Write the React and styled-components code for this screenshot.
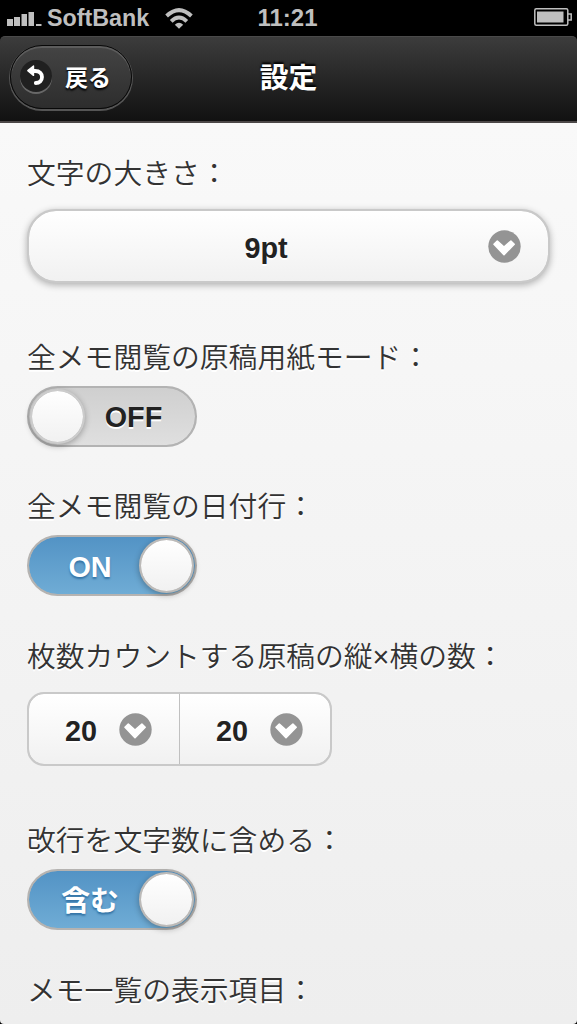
import React, { Component } from 'react';
import styled, { createGlobalStyle } from 'styled-components';

const GlobalStyle = createGlobalStyle`
    * {
        box-sizing: border-box;
    }

    body {
        margin: 0;
        background: #000;
        font-family: "Liberation Sans", "Noto Sans CJK JP", sans-serif;
    }
`;

const Screen = styled.div`
    display: flex;
    flex-direction: column;
    width: 577px;
    height: 1024px;
    overflow: hidden;
    background: #000;
`;

const StatusBar = styled.div`
    display: grid;
    grid-template-columns: 1fr auto 1fr;
    align-items: center;
    flex: none;
    height: 36px;
    padding: 0 5px 0 7px;
    color: #bfbfbf;
    font-size: 23.3px;
    font-weight: 700;
    line-height: 36px;
`;

const Carrier = styled.div`
    display: flex;
    align-items: center;

    span {
        margin: 0 16px 0 5px;
    }
`;

const Clock = styled.div`
    margin-left: -4px;
    font-size: 24px;
`;

const Power = styled.div`
    display: flex;
    justify-content: flex-end;
    padding-bottom: 2px;
`;

const Header = styled.header`
    display: grid;
    grid-template-columns: 1fr auto 1fr;
    align-items: center;
    flex: none;
    height: 87px;
    padding: 0 10px 5px;
    border-top: 1px solid #4a4a4a;
    border-bottom: 2px solid #4c4848;
    border-radius: 5px 5px 0 0;
    background: linear-gradient(#3c3c3c, #111);
    color: #fff;
    text-shadow: 0 -2px 2px #000;

    h1 {
        margin: 0;
        padding-top: 3px;
        font-size: 28.8px;
        font-weight: 700;
        line-height: 40px;
    }
`;

const BackButton = styled.button`
    display: flex;
    align-items: center;
    justify-self: start;
    width: 122px;
    height: 64px;
    padding: 0 0 2px 9px;
    border: 1px solid #080808;
    border-radius: 32px;
    background: linear-gradient(#444, #2d2d2d);
    box-shadow: inset 0 2px 0 #5c5c5c, 0 1px 0 1px #555;
    color: #fff;
    font-family: inherit;
    font-size: 23px;
    font-weight: 700;
    text-shadow: 0 2px 2px #000;
`;

const BackCircle = styled.span`
    display: flex;
    align-items: center;
    justify-content: center;
    width: 32px;
    height: 32px;
    margin-right: 13px;
    border-radius: 50%;
    background: #202020;
    box-shadow: 0 2px 0 #686868;
`;

const Content = styled.main`
    flex: 1;
    padding: 30px 27px 0;
    border-radius: 0 0 4px 4px;
    background: linear-gradient(#f9f9f9, #eee);
    color: #333;
    overflow: hidden;
`;

const Field = styled.div`
    margin-bottom: ${props => props.gap || '0'};
`;

const Label = styled.div`
    height: 40px;
    margin-bottom: ${props => props.gap || '9px'};
    font-size: 28.8px;
    font-weight: 350;
    line-height: 42px;
    white-space: nowrap;
    text-shadow: 0 2px 0 #fff;
`;

const SelectButton = styled.button`
    display: flex;
    align-items: center;
    width: 100%;
    height: 74px;
    padding: 0 27px 0 15px;
    border: 2px solid #c9c9c9;
    border-radius: 29px;
    background: linear-gradient(#fff, #f1f1f1) padding-box, #c9c9c9;
    box-shadow: 0 2px 7px rgba(0, 0, 0, 0.3);
    color: #222;
    font-family: inherit;
    font-size: 28.8px;
    font-weight: 700;
    text-shadow: 0 2px 0 #fff;

    span {
        flex: 1;
        padding-top: 4px;
        text-align: center;
    }
`;

const SelectGroup = styled.div`
    display: flex;
    width: 305px;
    height: 74px;
    border: 2px solid #c9c9c9;
    border-radius: 17px;
    background: linear-gradient(#fff, #f1f1f1) padding-box, #c9c9c9;
`;

const GroupButton = styled.button`
    display: flex;
    align-items: center;
    width: ${props => props.width};
    padding: 0 0 0 36px;
    border: 0;
    border-left: ${props => props.divided ? '1px solid #c0c0c0' : '0'};
    background: transparent;
    color: #222;
    font-family: inherit;
    font-size: 28.8px;
    font-weight: 700;
    text-shadow: 0 2px 0 #fff;

    span {
        width: 54px;
        padding-top: 5px;
        text-align: left;
    }
`;

const Toggle = styled.div`
    display: flex;
    flex-direction: ${props => props.on ? 'row' : 'row-reverse'};
    align-items: center;
    width: 170px;
    height: 61px;
    padding: ${props => props.on ? '0 1px 0 0' : '0 0 0 1px'};
    border: 2px solid ${props => props.on ? '#b5b3b1' : '#b3b3b3'};
    border-radius: 31px;
    background: ${props => props.on
        ? 'linear-gradient(#5393c5, #6facd5) padding-box, #b5b3b1'
        : 'linear-gradient(#cfcfcf, #dfdfdf) padding-box, #b3b3b3'};
    color: ${props => props.on ? '#fff' : '#222'};
    font-size: 28.8px;
    font-weight: 700;
    line-height: 40px;
    text-shadow: ${props => props.on ? '0 2px 2px #3373a5' : '0 2px 0 #fff'};

    span {
        flex: 1;
        padding-top: ${props => props.on ? '2px' : '1px'};
        padding-left: ${props => props.on ? '12px' : '0'};
        padding-right: ${props => props.on ? '0' : '13px'};
        text-align: center;
    }
`;

const Knob = styled.div`
    flex: none;
    width: 55px;
    height: 55px;
    border: 2px solid ${props => props.on ? '#bcbab8' : '#ccc'};
    border-radius: 50%;
    background: linear-gradient(#fff, #f1f1f1) padding-box, #c4c4c4;
    box-shadow: 0 2px 6px rgba(0, 0, 0, 0.3);
`;

const Signal = () => (
    <svg width="35" height="16" viewBox="0 0 35 16" fill="#bfbfbf">
        <rect x="0" y="9" width="6" height="7" />
        <rect x="7" y="7" width="6" height="9" />
        <rect x="14.5" y="4" width="5.5" height="12" />
        <rect x="21.5" y="2" width="5.5" height="14" />
        <rect x="29" y="14" width="5.5" height="2" />
    </svg>
);

const Wifi = () => (
    <svg width="28" height="21" viewBox="0 0 28 21" fill="none" stroke="#bfbfbf" strokeWidth="3.9">
        <path d="M1.6 8 Q14 -3.8 26.4 8" />
        <path d="M6.2 13.3 Q14 5.8 21.8 13.3" />
        <path d="M9.8 16.8 Q14 12.6 18.2 16.8 L14 20.8 Z" fill="#bfbfbf" stroke="none" />
    </svg>
);

const Battery = () => (
    <svg width="38" height="18" viewBox="0 0 38 18" fill="none" stroke="#bfbfbf" strokeWidth="1.5">
        <rect x="0.8" y="0.8" width="33" height="16.4" rx="1.5" />
        <path d="M34 6 H37.2 V12 H34" />
        <rect x="3" y="3.5" width="26.5" height="11" fill="#bfbfbf" stroke="none" />
    </svg>
);

const BackArrow = () => (
    <svg width="20" height="22" viewBox="0 0 20 22" fill="none" stroke="#fff">
        <path d="M6 6 H9 C14 6 16 9 16 12 C16 15.5 13.5 18 9.8 18" strokeWidth="3.8" strokeLinecap="round" />
        <path d="M1.8 5.6 L7.5 1 V10.4 Z" fill="#fff" strokeWidth="1.4" strokeLinejoin="round" />
    </svg>
);

const Chevron = () => (
    <svg width="33" height="33" viewBox="0 0 33 33">
        <circle cx="16.5" cy="16.5" r="16.2" fill="#949494" />
        <path
            d="M6 14.2 L9.3 11 L16 17 L22.9 11 L26.2 14.2 L16 24.6 Z"
            fill="#fff"
            stroke="#fff"
            strokeWidth="1.6"
            strokeLinejoin="round"
        />
    </svg>
);

const Switch = ({ on, text }) => (
    <Toggle on={on ? 1 : 0}>
        <span>{text}</span>
        <Knob on={on ? 1 : 0} />
    </Toggle>
);

export default class App extends Component {
    render() {
        return (
            <Screen>
                <GlobalStyle />
                <StatusBar>
                    <Carrier>
                        <Signal />
                        <span>SoftBank</span>
                        <Wifi />
                    </Carrier>
                    <Clock>11:21</Clock>
                    <Power><Battery /></Power>
                </StatusBar>
                <Header>
                    <BackButton>
                        <BackCircle><BackArrow /></BackCircle>
                        戻る
                    </BackButton>
                    <h1>設定</h1>
                </Header>
                <Content>
                    <Field gap="54px">
                        <Label gap="16px">文字の大きさ：</Label>
                        <SelectButton>
                            <span>9pt</span>
                            <Chevron />
                        </SelectButton>
                    </Field>
                    <Field gap="39px">
                        <Label>全メモ閲覧の原稿用紙モード：</Label>
                        <Switch text="OFF" />
                    </Field>
                    <Field gap="40px">
                        <Label>全メモ閲覧の日付行：</Label>
                        <Switch on text="ON" />
                    </Field>
                    <Field gap="54px">
                        <Label gap="16px">枚数カウントする原稿の縦×横の数：</Label>
                        <SelectGroup>
                            <GroupButton width="150px">
                                <span>20</span>
                                <Chevron />
                            </GroupButton>
                            <GroupButton width="151px" divided={1}>
                                <span>20</span>
                                <Chevron />
                            </GroupButton>
                        </SelectGroup>
                    </Field>
                    <Field gap="40px">
                        <Label>改行を文字数に含める：</Label>
                        <Switch on text="含む" />
                    </Field>
                    <Field>
                        <Label>メモ一覧の表示項目：</Label>
                    </Field>
                </Content>
            </Screen>
        );
    }
}
